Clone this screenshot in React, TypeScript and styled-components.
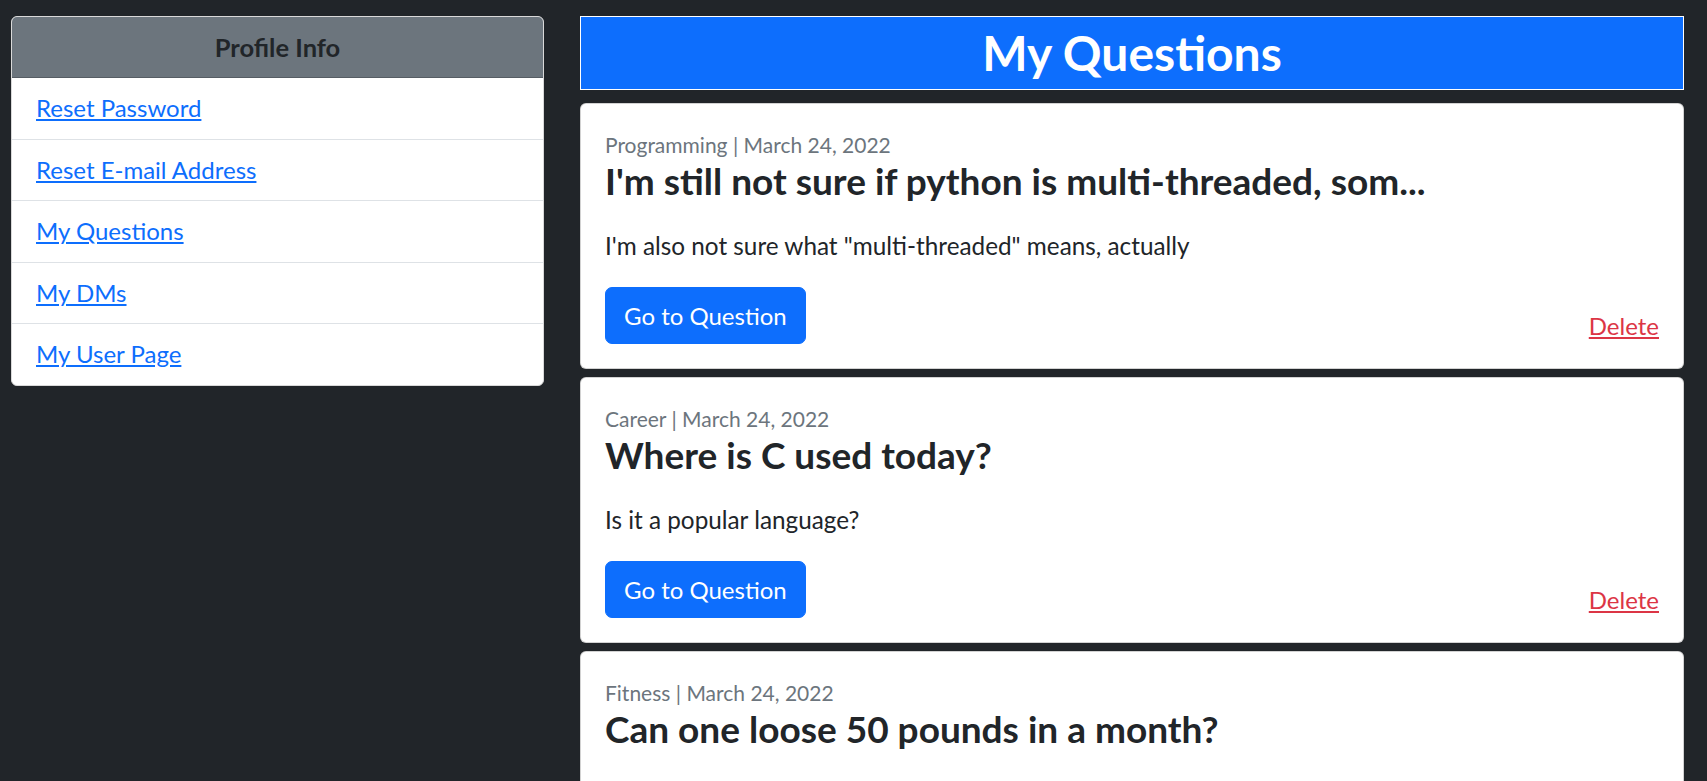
import React from "react";
import styled, { createGlobalStyle } from "styled-components";

const GlobalStyle = createGlobalStyle`
  html, body {
    margin: 0;
    padding: 0;
    background: #212529;
  }
  body {
    font-family: Lato, "Open Sans", "Noto Sans", sans-serif;
    color: #212529;
  }
  * { box-sizing: border-box; }
`;

const Page = styled.div`
  display: flex;
  align-items: flex-start;
  gap: 36px;
  padding: 16px 23px 0 11px;
  min-height: 100vh;
  background: #212529;
`;

const Sidebar = styled.aside`
  flex: 0 0 533px;
  background: #fff;
  border: 1px solid #d9d9d9;
  border-radius: 6px;
  overflow: hidden;
`;

const SidebarHeader = styled.div`
  background: #6c757d;
  color: #212529;
  font-size: 25.5px;
  font-weight: 700;
  line-height: 36px;
  padding: 12px 24px;
  text-align: center;
  border-bottom: 1px solid rgba(0, 0, 0, 0.2);
`;

const NavList = styled.ul`
  list-style: none;
  margin: 0;
  padding: 0;
`;

const NavItem = styled.li`
  padding: 12px 24px 12.5px;
  line-height: 36px;
  font-size: 24px;
  & + & {
    border-top: 1px solid #dee2e6;
  }
`;

const NavLink = styled.a`
  color: #0d6efd;
  text-decoration: underline;
  cursor: pointer;
`;

const Main = styled.main`
  flex: 1 1 auto;
  display: flex;
  flex-direction: column;
  gap: 8px;
`;

const Banner = styled.h1`
  margin: 0 0 5px;
  height: 74px;
  padding-top: 2px;
  background: #0d6efd;
  border: 1px solid #fff;
  color: #fff;
  font-size: 48px;
  font-weight: 700;
  line-height: 68px;
  text-align: center;
`;

const Card = styled.article`
  background: #fff;
  border: 1px solid rgba(0, 0, 0, 0.175);
  border-radius: 6px;
  padding: 24px;
  display: flex;
  flex-direction: column;
`;

const Meta = styled.div`
  margin-top: 2px;
  color: #6c757d;
  font-size: 21px;
  line-height: 30px;
`;

const Title = styled.h2`
  margin: -1px 0 0;
  font-size: 37px;
  font-weight: 700;
  line-height: 44px;
  color: #212529;
`;

const Body = styled.p`
  margin: 25px 0 23px;
  font-size: 24.3px;
  line-height: 36px;
  color: #212529;
`;

const Footer = styled.div`
  display: flex;
  justify-content: space-between;
  align-items: flex-end;
`;

const PrimaryButton = styled.button`
  font-family: inherit;
  font-size: 24px;
  line-height: 36px;
  padding: 9.5px 18px;
  background: #0d6efd;
  color: #fff;
  border: 1px solid #0d6efd;
  border-radius: 7px;
  cursor: pointer;
`;

const DeleteLink = styled.a`
  color: #dc3545;
  font-size: 24px;
  line-height: 36px;
  text-decoration: underline;
  cursor: pointer;
`;

type Question = {
  category: string;
  date: string;
  title: string;
  body: string;
};

const questions: Question[] = [
  {
    category: "Programming",
    date: "March 24, 2022",
    title: "I'm still not sure if python is multi-threaded, som...",
    body: 'I\'m also not sure what "multi-threaded" means, actually',
  },
  {
    category: "Career",
    date: "March 24, 2022",
    title: "Where is C used today?",
    body: "Is it a popular language?",
  },
  {
    category: "Fitness",
    date: "March 24, 2022",
    title: "Can one loose 50 pounds in a month?",
    body: "Asking for a friend.",
  },
];

const navLinks = [
  "Reset Password",
  "Reset E-mail Address",
  "My Questions",
  "My DMs",
  "My User Page",
];

export default function App() {
  return (
    <>
      <GlobalStyle />
      <Page>
        <Sidebar>
          <SidebarHeader>Profile Info</SidebarHeader>
          <NavList>
            {navLinks.map((l) => (
              <NavItem key={l}>
                <NavLink>{l}</NavLink>
              </NavItem>
            ))}
          </NavList>
        </Sidebar>
        <Main>
          <Banner>My Questions</Banner>
          {questions.map((q) => (
            <Card key={q.title}>
              <Meta>
                {q.category} | {q.date}
              </Meta>
              <Title>{q.title}</Title>
              <Body>{q.body}</Body>
              <Footer>
                <PrimaryButton>Go to Question</PrimaryButton>
                <DeleteLink>Delete</DeleteLink>
              </Footer>
            </Card>
          ))}
        </Main>
      </Page>
    </>
  );
}
